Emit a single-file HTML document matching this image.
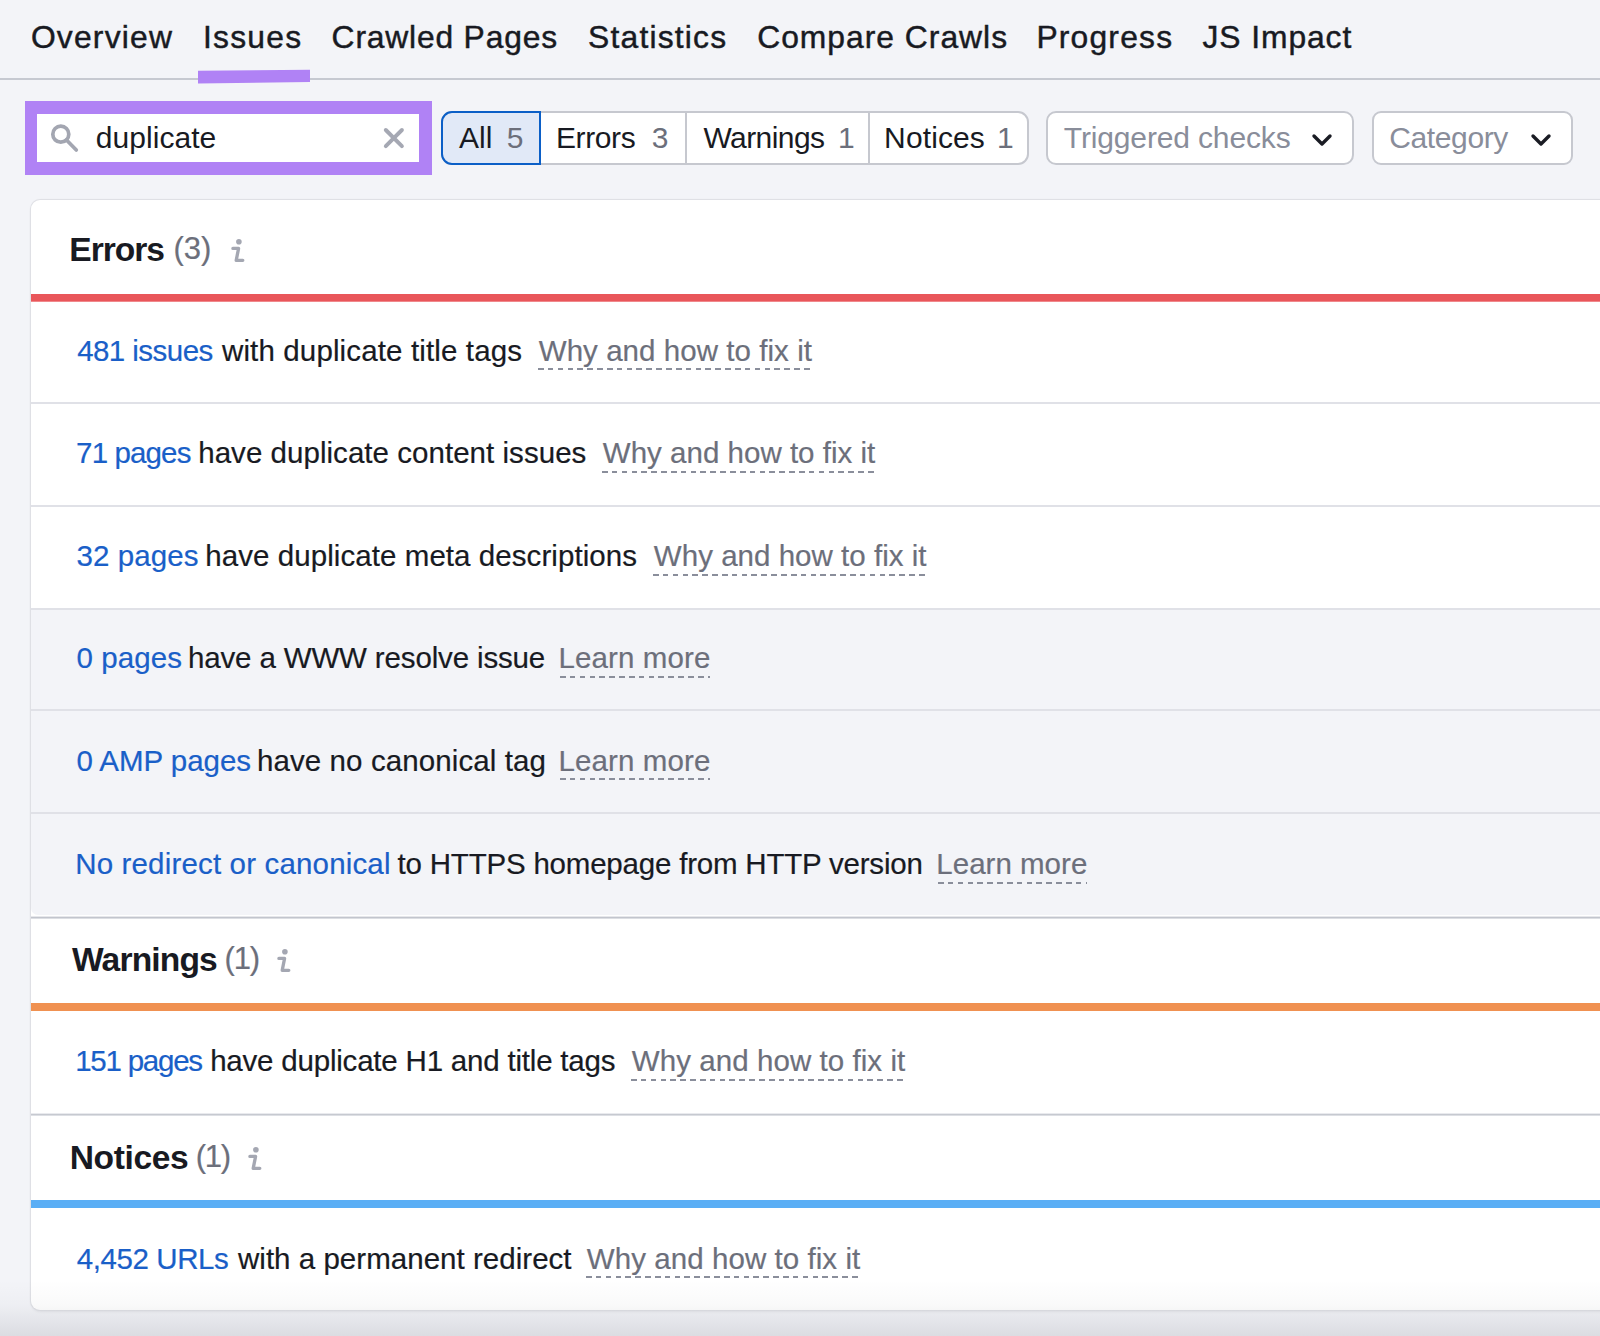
<!DOCTYPE html>
<html><head><meta charset="utf-8"><style>
html,body{margin:0;padding:0}
body{width:1600px;height:1336px;overflow:hidden;position:relative;background:#f3f4f8;font-family:"Liberation Sans",sans-serif}
.t{position:absolute;white-space:nowrap}
.r{position:absolute}
.bot{position:absolute;left:0;top:1280px;width:1600px;height:56px;background:linear-gradient(to bottom,rgba(10,12,30,0) 0px,rgba(10,12,30,0.025) 25px,rgba(10,12,30,0.1) 56px)}
</style></head><body>
<div class="r" style="left:0px;top:77.5px;width:1600px;height:2.0px;background:#c6c9d1"></div>
<div class="t" style="left:30.89px;top:21.98px;font-size:31.8px;line-height:31.8px;letter-spacing:1.215px;color:#181a22;-webkit-text-stroke:0.45px #181a22">Overview</div>
<div class="t" style="left:203.06px;top:21.98px;font-size:31.8px;line-height:31.8px;letter-spacing:1.231px;color:#181a22;-webkit-text-stroke:0.45px #181a22">Issues</div>
<div class="t" style="left:331.61px;top:21.98px;font-size:31.8px;line-height:31.8px;letter-spacing:0.818px;color:#181a22;-webkit-text-stroke:0.45px #181a22">Crawled Pages</div>
<div class="t" style="left:588.07px;top:21.98px;font-size:31.8px;line-height:31.8px;letter-spacing:1.205px;color:#181a22;-webkit-text-stroke:0.45px #181a22">Statistics</div>
<div class="t" style="left:757.21px;top:21.98px;font-size:31.8px;line-height:31.8px;letter-spacing:1.006px;color:#181a22;-webkit-text-stroke:0.45px #181a22">Compare Crawls</div>
<div class="t" style="left:1036.38px;top:21.98px;font-size:31.8px;line-height:31.8px;letter-spacing:1.208px;color:#181a22;-webkit-text-stroke:0.45px #181a22">Progress</div>
<div class="t" style="left:1202.52px;top:21.98px;font-size:31.8px;line-height:31.8px;letter-spacing:0.921px;color:#181a22;-webkit-text-stroke:0.45px #181a22">JS Impact</div>
<svg class="r" style="left:0;top:0" width="400" height="100"><polygon points="198,70.7 310,69.8 310,82.1 198,83.4" fill="#b082f5"/></svg>
<div class="r" style="left:24.5px;top:101px;width:407.3px;height:73.80000000000001px;background:#b082f5"></div>
<div class="r" style="left:37.3px;top:113.9px;width:381.7px;height:48.19999999999999px;background:#fff"></div>
<svg class="r" style="left:49px;top:123px" width="32" height="32" viewBox="0 0 32 32"><circle cx="11.8" cy="11.2" r="8" fill="none" stroke="#a3a6b1" stroke-width="3.7"/><line x1="17.5" y1="17" x2="27.3" y2="27" stroke="#a3a6b1" stroke-width="3.7" stroke-linecap="round"/></svg>
<div class="t" style="left:95.72px;top:122.60px;font-size:30px;line-height:30px;letter-spacing:0.059px;color:#181a22;">duplicate</div>
<svg class="r" style="left:382px;top:127px" width="24" height="24" viewBox="0 0 24 24"><path d="M3.8 3L19.9 19.1M19.9 3L3.8 19.1" stroke="#a5a8b3" stroke-width="3.9" stroke-linecap="round"/></svg>
<div class="r" style="left:440.8px;top:110.6px;width:588px;height:54.8px;box-sizing:border-box;border:2px solid #c6c8cf;border-radius:11px;background:#fff"></div>
<div class="r" style="left:440.8px;top:110.6px;width:100.4px;height:54.8px;box-sizing:border-box;border:2px solid #0b5fc7;border-radius:11px 0 0 11px;background:#e1e9f7"></div>
<div class="r" style="left:684.6px;top:112px;width:2.0px;height:52.5px;background:#c6c8cf"></div>
<div class="r" style="left:867.6px;top:112px;width:2.0px;height:52.5px;background:#c6c8cf"></div>
<div class="t" style="left:459.09px;top:123.00px;font-size:30px;line-height:30px;letter-spacing:0.000px;color:#181a22;">All</div>
<div class="t" style="left:506.68px;top:123.00px;font-size:30px;line-height:30px;letter-spacing:0.000px;color:#6c6f7b;">5</div>
<div class="t" style="left:555.92px;top:123.00px;font-size:30px;line-height:30px;letter-spacing:-0.370px;color:#181a22;">Errors</div>
<div class="t" style="left:651.75px;top:123.00px;font-size:30px;line-height:30px;letter-spacing:0.000px;color:#6c6f7b;">3</div>
<div class="t" style="left:703.45px;top:123.00px;font-size:30px;line-height:30px;letter-spacing:-0.575px;color:#181a22;">Warnings</div>
<div class="t" style="left:838.06px;top:123.00px;font-size:30px;line-height:30px;letter-spacing:0.000px;color:#6c6f7b;">1</div>
<div class="t" style="left:884.12px;top:123.00px;font-size:30px;line-height:30px;letter-spacing:0.112px;color:#181a22;">Notices</div>
<div class="t" style="left:996.96px;top:123.00px;font-size:30px;line-height:30px;letter-spacing:0.000px;color:#6c6f7b;">1</div>
<div class="r" style="left:1046px;top:111px;width:308.3px;height:54px;box-sizing:border-box;border:2px solid #c6c8cf;border-radius:10px;background:#fff"></div>
<div class="r" style="left:1371.8px;top:111px;width:201.2px;height:54px;box-sizing:border-box;border:2px solid #c6c8cf;border-radius:9px;background:#fff"></div>
<div class="t" style="left:1063.83px;top:123.00px;font-size:30px;line-height:30px;letter-spacing:-0.143px;color:#898d9a;">Triggered checks</div>
<div class="t" style="left:1389.20px;top:123.00px;font-size:30px;line-height:30px;letter-spacing:-0.364px;color:#898d9a;">Category</div>
<svg class="r" style="left:1310px;top:132px" width="24" height="16" viewBox="0 0 24 16"><path d="M4 4L12 12L20 4" fill="none" stroke="#1a1c24" stroke-width="3.4" stroke-linecap="round" stroke-linejoin="round"/></svg>
<svg class="r" style="left:1529px;top:132px" width="24" height="16" viewBox="0 0 24 16"><path d="M4 4L12 12L20 4" fill="none" stroke="#1a1c24" stroke-width="3.4" stroke-linecap="round" stroke-linejoin="round"/></svg>
<div class="r" style="left:30.5px;top:199.6px;width:1600px;height:1110.4px;background:#fff;border-radius:9px;box-shadow:0 0 0 1px #dfe0e5, 0 0 3px rgba(0,0,0,0.06), 0 2px 3px rgba(0,0,0,0.06)"></div>
<div class="r" style="left:31px;top:294px;width:1569px;height:7px;background:#e9565a"></div>
<div class="r" style="left:31px;top:301px;width:1569px;height:1px;background:rgba(233,86,90,0.7)"></div>
<div class="r" style="left:31px;top:609px;width:1600px;height:306px;background:#f3f4f8;border-radius:0 0 0 7px"></div>
<div class="r" style="left:31px;top:402.4px;width:1569px;height:2.0px;background:#e0e1e7"></div>
<div class="r" style="left:31px;top:505.2px;width:1569px;height:2.0px;background:#e0e1e7"></div>
<div class="r" style="left:31px;top:607.6px;width:1569px;height:2.0px;background:#e0e1e7"></div>
<div class="r" style="left:31px;top:709.2px;width:1569px;height:2.0px;background:#e0e1e7"></div>
<div class="r" style="left:31px;top:811.6px;width:1569px;height:2.0px;background:#e0e1e7"></div>
<div class="r" style="left:31px;top:917px;width:1569px;height:1px;background:#c2c5cd"></div>
<div class="r" style="left:31px;top:916px;width:1569px;height:1px;background:#e6e7eb"></div>
<div class="r" style="left:31px;top:918px;width:1569px;height:1px;background:#dcdee3"></div>
<div class="r" style="left:31px;top:1003px;width:1569px;height:8px;background:#f09151"></div>
<div class="r" style="left:31px;top:1114px;width:1569px;height:1px;background:#c6c9d0"></div>
<div class="r" style="left:31px;top:1113px;width:1569px;height:1px;background:#e9eaee"></div>
<div class="r" style="left:31px;top:1115px;width:1569px;height:1px;background:#dddfe4"></div>
<div class="r" style="left:31px;top:1200px;width:1569px;height:8px;background:#5aaef5"></div>
<div class="t" style="left:69.33px;top:233.30px;font-size:33.6px;line-height:33.6px;letter-spacing:-1.058px;color:#181a22;font-weight:bold;">Errors</div>
<div class="t" style="left:173.39px;top:233.30px;font-size:31px;line-height:31px;letter-spacing:0.000px;color:#6c6f7b;-webkit-text-stroke:0.2px #6c6f7b">(3)</div>
<svg class="r" style="left:226px;top:234.0px" width="24" height="32" viewBox="0 0 24 32"><circle cx="12.9" cy="7.7" r="2.8" fill="#a4a7b2"/><path d="M6.9 14.4H12.6L10.2 26.3H16.8" fill="none" stroke="#a4a7b2" stroke-width="3.3" stroke-linecap="round" stroke-linejoin="round"/></svg>
<div class="t" style="left:72.00px;top:943.15px;font-size:33.6px;line-height:33.6px;letter-spacing:-0.849px;color:#181a22;font-weight:bold;">Warnings</div>
<div class="t" style="left:223.41px;top:943.15px;font-size:31px;line-height:31px;letter-spacing:0.000px;color:#6c6f7b;-webkit-text-stroke:0.2px #6c6f7b;letter-spacing:-1.2px;margin-left:1.2px">(1)</div>
<svg class="r" style="left:272px;top:943.85px" width="24" height="32" viewBox="0 0 24 32"><circle cx="12.9" cy="7.7" r="2.8" fill="#a4a7b2"/><path d="M6.9 14.4H12.6L10.2 26.3H16.8" fill="none" stroke="#a4a7b2" stroke-width="3.3" stroke-linecap="round" stroke-linejoin="round"/></svg>
<div class="t" style="left:69.73px;top:1141.25px;font-size:33.6px;line-height:33.6px;letter-spacing:-0.395px;color:#181a22;font-weight:bold;">Notices</div>
<div class="t" style="left:194.51px;top:1141.25px;font-size:31px;line-height:31px;letter-spacing:0.000px;color:#6c6f7b;-webkit-text-stroke:0.2px #6c6f7b;letter-spacing:-1.2px;margin-left:1.2px">(1)</div>
<svg class="r" style="left:243px;top:1141.95px" width="24" height="32" viewBox="0 0 24 32"><circle cx="12.9" cy="7.7" r="2.8" fill="#a4a7b2"/><path d="M6.9 14.4H12.6L10.2 26.3H16.8" fill="none" stroke="#a4a7b2" stroke-width="3.3" stroke-linecap="round" stroke-linejoin="round"/></svg>
<div class="t" style="left:77.14px;top:335.82px;font-size:29.5px;line-height:29.5px;letter-spacing:-0.546px;color:#1a5fc8;-webkit-text-stroke:0.2px #1a5fc8">481 issues</div>
<div class="t" style="left:221.97px;top:335.82px;font-size:29.5px;line-height:29.5px;letter-spacing:0.134px;color:#181a22;-webkit-text-stroke:0.2px #181a22">with duplicate title tags</div>
<div class="t" style="left:538.75px;top:335.82px;font-size:29.5px;line-height:29.5px;letter-spacing:0.052px;color:#6c6f7b;-webkit-text-stroke:0.2px #6c6f7b">Why and how to fix it</div>
<div class="r" style="left:537.9px;top:368.3px;width:274.80000000000007px;height:2.0px;background:repeating-linear-gradient(to right,#8a8e9b 0 5.6px,transparent 5.6px 9.85px)"></div>
<div class="t" style="left:76.12px;top:438.42px;font-size:29.5px;line-height:29.5px;letter-spacing:-0.869px;color:#1a5fc8;-webkit-text-stroke:0.2px #1a5fc8">71 pages</div>
<div class="t" style="left:198.24px;top:438.42px;font-size:29.5px;line-height:29.5px;letter-spacing:0.038px;color:#181a22;-webkit-text-stroke:0.2px #181a22">have duplicate content issues</div>
<div class="t" style="left:602.85px;top:438.42px;font-size:29.5px;line-height:29.5px;letter-spacing:0.012px;color:#6c6f7b;-webkit-text-stroke:0.2px #6c6f7b">Why and how to fix it</div>
<div class="r" style="left:602px;top:470.9px;width:274px;height:2.0px;background:repeating-linear-gradient(to right,#8a8e9b 0 5.6px,transparent 5.6px 9.85px)"></div>
<div class="t" style="left:76.49px;top:541.32px;font-size:29.5px;line-height:29.5px;letter-spacing:0.092px;color:#1a5fc8;-webkit-text-stroke:0.2px #1a5fc8">32 pages</div>
<div class="t" style="left:205.34px;top:541.32px;font-size:29.5px;line-height:29.5px;letter-spacing:0.065px;color:#181a22;-webkit-text-stroke:0.2px #181a22">have duplicate meta descriptions</div>
<div class="t" style="left:653.85px;top:541.32px;font-size:29.5px;line-height:29.5px;letter-spacing:0.027px;color:#6c6f7b;-webkit-text-stroke:0.2px #6c6f7b">Why and how to fix it</div>
<div class="r" style="left:653px;top:573.8px;width:274.29999999999995px;height:2.0px;background:repeating-linear-gradient(to right,#8a8e9b 0 5.6px,transparent 5.6px 9.85px)"></div>
<div class="t" style="left:76.42px;top:643.32px;font-size:29.5px;line-height:29.5px;letter-spacing:0.111px;color:#1a5fc8;-webkit-text-stroke:0.2px #1a5fc8">0 pages</div>
<div class="t" style="left:187.94px;top:643.32px;font-size:29.5px;line-height:29.5px;letter-spacing:-0.144px;color:#181a22;-webkit-text-stroke:0.2px #181a22">have a WWW resolve issue</div>
<div class="t" style="left:558.57px;top:643.32px;font-size:29.5px;line-height:29.5px;letter-spacing:0.097px;color:#6c6f7b;-webkit-text-stroke:0.2px #6c6f7b">Learn more</div>
<div class="r" style="left:560px;top:675.8px;width:150px;height:2.0px;background:repeating-linear-gradient(to right,#8a8e9b 0 5.6px,transparent 5.6px 9.85px)"></div>
<div class="t" style="left:76.42px;top:745.52px;font-size:29.5px;line-height:29.5px;letter-spacing:-0.032px;color:#1a5fc8;-webkit-text-stroke:0.2px #1a5fc8">0 AMP pages</div>
<div class="t" style="left:256.94px;top:745.52px;font-size:29.5px;line-height:29.5px;letter-spacing:0.097px;color:#181a22;-webkit-text-stroke:0.2px #181a22">have no canonical tag</div>
<div class="t" style="left:558.57px;top:745.52px;font-size:29.5px;line-height:29.5px;letter-spacing:0.097px;color:#6c6f7b;-webkit-text-stroke:0.2px #6c6f7b">Learn more</div>
<div class="r" style="left:560px;top:778.0px;width:150px;height:2.0px;background:repeating-linear-gradient(to right,#8a8e9b 0 5.6px,transparent 5.6px 9.85px)"></div>
<div class="t" style="left:75.17px;top:849.22px;font-size:29.5px;line-height:29.5px;letter-spacing:0.165px;color:#1a5fc8;-webkit-text-stroke:0.2px #1a5fc8">No redirect or canonical</div>
<div class="t" style="left:397.56px;top:849.22px;font-size:29.5px;line-height:29.5px;letter-spacing:-0.205px;color:#181a22;-webkit-text-stroke:0.2px #181a22">to HTTPS homepage from HTTP version</div>
<div class="t" style="left:936.32px;top:849.22px;font-size:29.5px;line-height:29.5px;letter-spacing:0.013px;color:#6c6f7b;-webkit-text-stroke:0.2px #6c6f7b">Learn more</div>
<div class="r" style="left:937.75px;top:881.7px;width:149.25px;height:2.0px;background:repeating-linear-gradient(to right,#8a8e9b 0 5.6px,transparent 5.6px 9.85px)"></div>
<div class="t" style="left:75.19px;top:1046.22px;font-size:29.5px;line-height:29.5px;letter-spacing:-1.240px;color:#1a5fc8;-webkit-text-stroke:0.2px #1a5fc8">151 pages</div>
<div class="t" style="left:210.13px;top:1046.22px;font-size:29.5px;line-height:29.5px;letter-spacing:-0.202px;color:#181a22;-webkit-text-stroke:0.2px #181a22">have duplicate H1 and title tags</div>
<div class="t" style="left:631.85px;top:1046.22px;font-size:29.5px;line-height:29.5px;letter-spacing:0.062px;color:#6c6f7b;-webkit-text-stroke:0.2px #6c6f7b">Why and how to fix it</div>
<div class="r" style="left:631px;top:1078.7px;width:275px;height:2.0px;background:repeating-linear-gradient(to right,#8a8e9b 0 5.6px,transparent 5.6px 9.85px)"></div>
<div class="t" style="left:76.84px;top:1243.92px;font-size:29.5px;line-height:29.5px;letter-spacing:-0.429px;color:#1a5fc8;-webkit-text-stroke:0.2px #1a5fc8">4,452 URLs</div>
<div class="t" style="left:237.97px;top:1243.92px;font-size:29.5px;line-height:29.5px;letter-spacing:0.030px;color:#181a22;-webkit-text-stroke:0.2px #181a22">with a permanent redirect</div>
<div class="t" style="left:586.85px;top:1243.92px;font-size:29.5px;line-height:29.5px;letter-spacing:0.062px;color:#6c6f7b;-webkit-text-stroke:0.2px #6c6f7b">Why and how to fix it</div>
<div class="r" style="left:586px;top:1276.4px;width:275px;height:2.0px;background:repeating-linear-gradient(to right,#8a8e9b 0 5.6px,transparent 5.6px 9.85px)"></div>
<div class="bot"></div>
</body></html>
